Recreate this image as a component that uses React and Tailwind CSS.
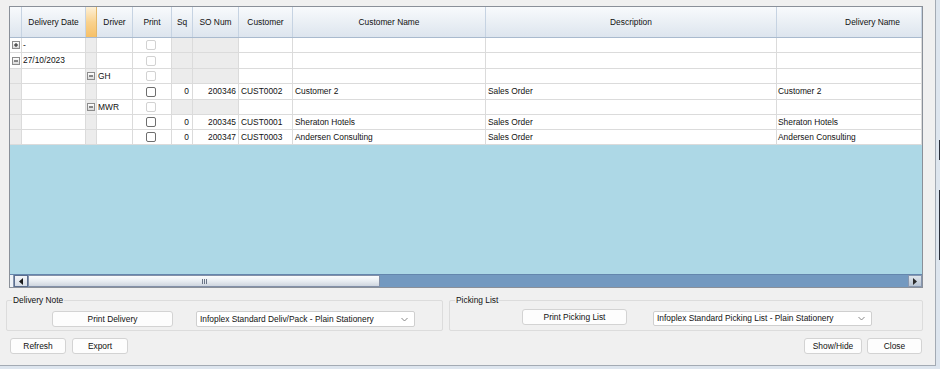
import React from "react"

const cols = "grid grid-cols-[12px_64px_11px_36px_39px_21px_46px_54px_193px_291px_145px]"

const rows = [
  { h: "h-[15px]", sel: "plus", date: "-", grayNums: true, box: "off" },
  { h: "h-[16px]", sel: "minus", date: "27/10/2023", grayNums: true, box: "off" },
  { h: "h-[15px]", selGray: true, grp: "minus", driver: "GH", grayNums: true, box: "off" },
  {
    h: "h-[16px]",
    selGray: true,
    box: "on",
    sq: "0",
    so: "200346",
    cust: "CUST0002",
    name: "Customer 2",
    desc: "Sales Order",
    dname: "Customer 2",
  },
  { h: "h-[15px]", selGray: true, grp: "minus", driver: "MWR", grayNums: true, box: "off" },
  {
    h: "h-[15px]",
    selGray: true,
    box: "on",
    sq: "0",
    so: "200345",
    cust: "CUST0001",
    name: "Sheraton Hotels",
    desc: "Sales Order",
    dname: "Sheraton Hotels",
  },
  {
    h: "h-[15px]",
    selGray: true,
    box: "on",
    sq: "0",
    so: "200347",
    cust: "CUST0003",
    name: "Andersen Consulting",
    desc: "Sales Order",
    dname: "Andersen Consulting",
  },
]

const Expander = ({ type }) => (
  <span className="w-[8px] h-[8px] border border-[#8c8c8c] bg-gradient-to-b from-[#ffffff] to-[#d9d9d9] flex items-center justify-center">
    <svg width="6" height="6" viewBox="0 0 6 6">
      <path d="M1 3h4" stroke="#222" strokeWidth="1" />
      {type === "plus" && <path d="M3 1v4" stroke="#222" strokeWidth="1" />}
    </svg>
  </span>
)

const CheckBox = ({ on }) => (
  <span
    className={`w-[10px] h-[10px] rounded-[2px] bg-white border ${on ? "border-[#6e6e6e]" : "border-[#d2d2d2]"}`}
  />
)

const cell = "border-r border-b border-[#dbdbdb] flex items-center overflow-hidden whitespace-nowrap"

const GridRow = ({ r }) => (
  <div className={`${cols} ${r.h}`}>
    <div className={`${cell} justify-center ${r.selGray ? "bg-[#ececec]" : "bg-white"}`}>
      {r.sel && <Expander type={r.sel} />}
    </div>
    <div className={`${cell} pl-[1px] bg-white`}>{r.date}</div>
    <div className={`${cell} justify-center bg-[#ececec]`}>{r.grp && <Expander type={r.grp} />}</div>
    <div className={`${cell} pl-[1px] bg-white`}>{r.driver}</div>
    <div className={`${cell} justify-center pr-[3px] bg-white`}>
      <CheckBox on={r.box === "on"} />
    </div>
    <div className={`${cell} justify-end pr-[3px] ${r.grayNums ? "bg-[#ececec]" : "bg-white"}`}>{r.sq}</div>
    <div className={`${cell} justify-end pr-[2px] ${r.grayNums ? "bg-[#ececec]" : "bg-white"}`}>{r.so}</div>
    <div className={`${cell} pl-[2px] bg-white`}>{r.cust}</div>
    <div className={`${cell} pl-[2px] bg-white`}>{r.name}</div>
    <div className={`${cell} pl-[2px] bg-white`}>{r.desc}</div>
    <div className={`${cell} pl-[1px] bg-white`}>{r.dname}</div>
  </div>
)

const headerCell =
  "border-r border-[#c6d3e2] flex items-center justify-center bg-gradient-to-b from-[#f8fafc] to-[#dde5ee]"

const WinButton = ({ children, className }) => (
  <button
    className={`flex items-center justify-center bg-[#fdfdfd] border border-[#d3d3d3] rounded-[3px] text-[#111] ${className}`}
  >
    {children}
  </button>
)

const Combo = ({ children, className }) => (
  <div className={`flex items-center bg-white border border-[#cfcfcf] rounded-[2px] pl-[3px] pr-[6px] ${className}`}>
    <span className="flex-1 whitespace-nowrap overflow-hidden">{children}</span>
    <svg width="7" height="5" viewBox="0 0 7 5">
      <path d="M0.5 1l3 3 3-3" fill="none" stroke="#7a7a7a" strokeWidth="0.9" />
    </svg>
  </div>
)

const GroupBox = ({ label, className, children }) => (
  <div className={`relative border border-[#dcdcdc] rounded-[2px] h-[31px] ${className}`}>
    <span className="absolute -top-[6px] left-[5px] px-[1px] bg-[#f0f0f0] leading-[10px] text-[#111]">{label}</span>
    {children}
  </div>
)

export default function App() {
  return (
    <div className="w-[940px] h-[369px] bg-[#dde5ee] overflow-hidden text-[8.4px] text-[#111] font-['Liberation_Sans',Arial,sans-serif] relative">
      <div className="w-[936px] h-[366px] bg-[#f0f0f0] border-r border-b border-[#a3aab3] flex flex-col">
        {/* grid */}
        <div className="ml-[9px] mt-[6px] w-[914px] h-[282px] border border-[#8a9099] flex flex-col">
          <div className={`${cols} h-[31px] border-b border-[#a9bace]`}>
            <div className={headerCell} />
            <div className={headerCell}>Delivery Date</div>
            <div className="border-r border-[#e3b86a] bg-gradient-to-b from-[#fdf0d6] via-[#f9d28e] to-[#f6c067]" />
            <div className={headerCell}>Driver</div>
            <div className={headerCell}>Print</div>
            <div className={headerCell}>Sq</div>
            <div className={headerCell}>SO Num</div>
            <div className={headerCell}>Customer</div>
            <div className={headerCell}>Customer Name</div>
            <div className={headerCell}>Description</div>
            <div className={`${headerCell} !justify-end pr-[21px]`}>Delivery Name</div>
          </div>
          {rows.map((r, i) => (
            <GridRow key={i} r={r} />
          ))}
          <div className="flex-1 bg-[#add8e6]" />
          {/* horizontal scrollbar */}
          <div className="h-[13px] flex bg-[#7399c0] border-t border-[#6486ad]">
            <div className="w-[4px] bg-[#eef2f6] border-r border-[#8796ae]" />
            <div className="w-[14px] flex items-center justify-center bg-gradient-to-b from-[#f4f6f9] to-[#d6dde6] border border-[#5c6f8f]">
              <svg width="4" height="7" viewBox="0 0 4 7">
                <path d="M4 0v7L0 3.5z" fill="#1b1b1b" />
              </svg>
            </div>
            <div className="w-[352px] flex items-center justify-center bg-gradient-to-b from-[#fbfcfd] via-[#e9edf2] to-[#cfd6df] border border-[#8390a8] rounded-[1px]">
              <div className="flex gap-[1px]">
                <span className="w-[1px] h-[5px] bg-[#6b7587]" />
                <span className="w-[1px] h-[5px] bg-[#6b7587]" />
                <span className="w-[1px] h-[5px] bg-[#6b7587]" />
              </div>
            </div>
            <div className="flex-1" />
            <div className="w-[14px] flex items-center justify-center bg-gradient-to-b from-[#dfe5ec] to-[#b8c4d3] border border-[#8797b0]">
              <svg width="4" height="7" viewBox="0 0 4 7">
                <path d="M0 0v7L4 3.5z" fill="#2a2a2a" />
              </svg>
            </div>
          </div>
        </div>

        {/* group boxes */}
        <div className="ml-[6px] mt-[12px] w-[917px] flex gap-[6px]">
          <GroupBox label="Delivery Note" className="w-[437px]">
            <div className="flex items-center pl-[45px] pt-[10px] gap-[23px]">
              <WinButton className="w-[121px] h-[16px]">Print Delivery</WinButton>
              <Combo className="w-[219px] h-[16px]">Infoplex Standard Deliv/Pack - Plain Stationery</Combo>
            </div>
          </GroupBox>
          <GroupBox label="Picking List" className="flex-1">
            <div className="flex items-start pl-[72px] pt-[8px] gap-[26px]">
              <WinButton className="w-[105px] h-[16px]">Print Picking List</WinButton>
              <Combo className="w-[219px] h-[15px] mt-[2px]">Infoplex Standard Picking List - Plain Stationery</Combo>
            </div>
          </GroupBox>
        </div>

        {/* bottom buttons */}
        <div className="ml-[10px] mr-[13px] mt-[7px] flex items-center">
          <WinButton className="w-[56px] h-[16px]">Refresh</WinButton>
          <WinButton className="w-[56px] h-[16px] ml-[6px]">Export</WinButton>
          <div className="flex-1" />
          <WinButton className="w-[58px] h-[16px]">Show/Hide</WinButton>
          <WinButton className="w-[55px] h-[16px] ml-[5px]">Close</WinButton>
        </div>
      </div>
      <div className="absolute right-0 top-[140px] w-[1px] h-[20px] bg-[#2a2f3a]" />
      <div className="absolute right-0 top-[190px] w-[1px] h-[70px] bg-[#2a2f3a]" />
    </div>
  )
}
